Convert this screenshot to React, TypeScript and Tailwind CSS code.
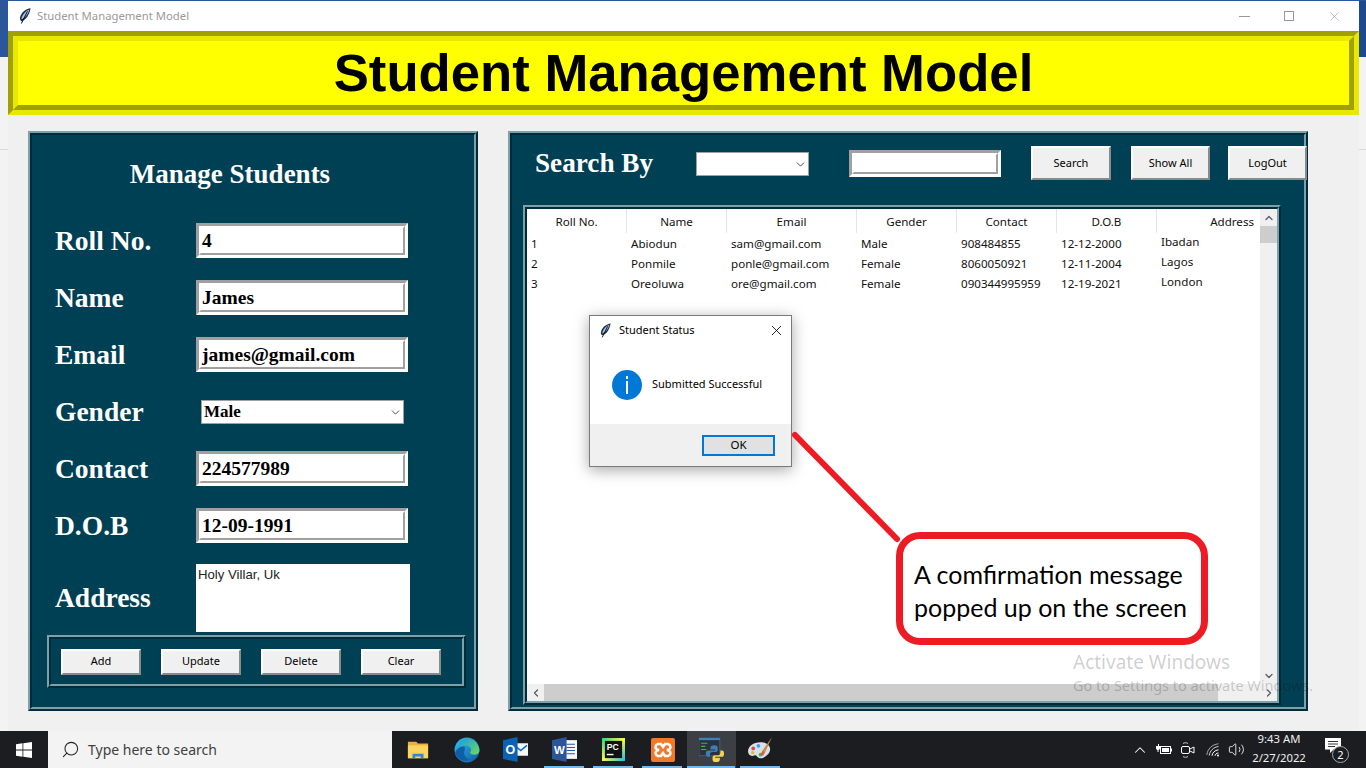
import React from 'react';
import { ChevronDown, ChevronLeft, ChevronRight, ChevronUp, Search, Volume2, X } from 'lucide-react';

const students = [
  { id: '1', name: 'Abiodun', email: 'sam@gmail.com', gender: 'Male', contact: '908484855', dob: '12-12-2000', address: 'Ibadan' },
  { id: '2', name: 'Ponmile', email: 'ponle@gmail.com', gender: 'Female', contact: '8060050921', dob: '12-11-2004', address: 'Lagos' },
  { id: '3', name: 'Oreoluwa', email: 'ore@gmail.com', gender: 'Female', contact: '090344995959', dob: '12-19-2021', address: 'London' },
];

const formFields = [
  { label: 'Roll No.', value: '4' },
  { label: 'Name', value: 'James' },
  { label: 'Email', value: 'james@gmail.com' },
];

const columns = 'grid grid-cols-[100px_100px_130px_100px_100px_100px_104px]';

function Feather({ className }: { className?: string }) {
  return (
    <svg viewBox="0 0 12 16" className={className}>
      <path d="M11.500 0.300C7 0.800 1.800 4.600 1 9.800C0.800 11.200 1.300 12.600 2.300 13.200C6.600 12.400 10.600 7 11.500 0.300Z" fill="#24303f" />
      <path d="M10.200 1.800C6.800 3 3 6.800 2.400 11.200C5.800 10.200 9.200 6.200 10.200 1.800Z" fill="#9cc4f4" />
      <path d="M8.400 3.400L2.400 15.500" stroke="#0b0f14" strokeWidth="1" fill="none" />
    </svg>
  );
}

function Ridge({ className, children }: { className?: string; children?: React.ReactNode }) {
  return (
    <div className={`shrink-0 border-2 border-t-[#7f9fa9] border-l-[#7f9fa9] border-r-[#002c3a] border-b-[#002c3a] ${className ?? ''}`}>
      <div className="w-full h-full border-2 border-t-[#002c3a] border-l-[#002c3a] border-r-[#7f9fa9] border-b-[#7f9fa9] bg-[#004054]">
        {children}
      </div>
    </div>
  );
}

function SunkenInput({ value, className }: { value?: string; className?: string }) {
  return (
    <div className={`shrink-0 border-[3px] border-t-[#a0a0a0] border-l-[#a0a0a0] border-r-white border-b-white bg-white ${className ?? ''}`}>
      <div className="w-full h-full border-2 border-t-white border-l-white border-r-[#a0a0a0] border-b-[#a0a0a0] flex items-center pl-px text-[19.500px] leading-none font-bold text-black font-['Liberation_Serif',serif]">
        {value}
      </div>
    </div>
  );
}

function TkButton({ label, className }: { label: string; className?: string }) {
  return (
    <button className={`shrink-0 flex items-center justify-center bg-[#f0f0f0] border-2 border-t-white border-l-white border-r-[#8a8a8a] border-b-[#8a8a8a] text-[11px] text-black ${className ?? ''}`}>
      {label}
    </button>
  );
}

function FormLabel({ children }: { children: React.ReactNode }) {
  return <span className="w-[141px] shrink-0 text-[27.500px] leading-none font-bold text-white font-['Liberation_Serif',serif]">{children}</span>;
}

function FolderIcon() {
  return (
    <svg viewBox="0 0 24 24" className="w-[22px] h-[22px]">
      <path d="M1 3h9l2 2h11v16H1z" fill="#e9b23c" />
      <rect x="1" y="7" width="22" height="14" fill="#fcd462" />
      <path d="M6 21v-5h12v5h-3v-2H9v2z" fill="#2d8ad6" />
    </svg>
  );
}

function EdgeIcon() {
  return (
    <svg viewBox="0 0 24 24" className="w-[26px] h-[26px]">
      <defs>
        <linearGradient id="edgeA" x1="0" y1="0" x2="1" y2="1">
          <stop offset="0" stopColor="#35c1f1" />
          <stop offset="1" stopColor="#0c59a4" />
        </linearGradient>
        <linearGradient id="edgeB" x1="0" y1="0" x2="1" y2="1">
          <stop offset="0" stopColor="#1b9de2" />
          <stop offset="1" stopColor="#6fdc5c" />
        </linearGradient>
      </defs>
      <circle cx="12" cy="12" r="11.500" fill="url(#edgeA)" />
      <path d="M5 6C8-1 22 0 23.500 12c.2 4-4 5-7 4-2-.6-2-2-1-3 1-2-1-5-4-5-3 0-5 1-6.500-2z" fill="url(#edgeB)" />
      <path d="M10 12c-2 4 1 8 5 9-5 3-12 0-14-6 1-4 5-7 9-6z" fill="#0f5fa8" />
    </svg>
  );
}

function OutlookIcon() {
  return (
    <svg viewBox="0 0 24 24" className="w-[25px] h-[25px]">
      <rect x="10" y="6" width="14" height="12" fill="#f4f8fc" />
      <path d="M11 8l6 5 6-5" fill="none" stroke="#0f6cbd" strokeWidth="1.500" />
      <path d="M0 3l14-3v24L0 21z" fill="#0a62b4" />
      <text x="7" y="16.500" textAnchor="middle" fontSize="12" fontWeight="700" fill="white" fontFamily="Liberation Sans, sans-serif">O</text>
    </svg>
  );
}

function WordIcon() {
  return (
    <svg viewBox="0 0 24 24" className="w-[25px] h-[25px]">
      <rect x="11" y="3" width="13" height="18" fill="#f4f6fa" />
      <path d="M14 7h8M14 10h8M14 13h8M14 16h8" stroke="#2b579a" strokeWidth="1" />
      <path d="M0 3l14-3v24L0 21z" fill="#2b579a" />
      <text x="7" y="16" textAnchor="middle" fontSize="11" fontWeight="700" fill="white" fontFamily="Liberation Sans, sans-serif">W</text>
    </svg>
  );
}

function PyCharmIcon() {
  return (
    <svg viewBox="0 0 24 24" className="w-[23px] h-[23px]">
      <defs>
        <linearGradient id="pcEdge" x1="0" y1="0" x2="1" y2="1">
          <stop offset="0" stopColor="#21d789" />
          <stop offset="0.500" stopColor="#fcf84a" />
          <stop offset="1" stopColor="#07c3f2" />
        </linearGradient>
      </defs>
      <rect width="24" height="24" fill="url(#pcEdge)" />
      <rect x="3" y="3" width="18" height="18" fill="#111" />
      <text x="5" y="13" fontSize="9" fontWeight="700" fill="white" fontFamily="Liberation Sans, sans-serif">PC</text>
      <rect x="5" y="16.500" width="7" height="1.500" fill="white" />
    </svg>
  );
}

function XamppIcon() {
  return (
    <svg viewBox="0 0 24 24" className="w-[24px] h-[24px]">
      <rect width="24" height="24" rx="2" fill="#f0792b" />
      <path d="M7 6h3l2 3 2-3h3a3 3 0 0 1 1 5.500l-2 .5 2 .5A3 3 0 0 1 17 18h-3l-2-3-2 3H7a3 3 0 0 1-1-5.500l2-.5-2-.5A3 3 0 0 1 7 6z" fill="none" stroke="white" strokeWidth="2.600" />
    </svg>
  );
}

function PythonIcon() {
  return (
    <svg viewBox="0 0 24 24" className="w-[25px] h-[25px]">
      <rect x="0" y="1" width="20" height="17" fill="#2c3239" stroke="#41648a" strokeWidth="0.800" />
      <rect x="0" y="1" width="20" height="2" fill="#3f82c4" />
      <path d="M2 6h6M2 9h4M2 12h5" stroke="#4caf50" strokeWidth="1" />
      <path d="M15 8c-3 0-4 1-4 2.500V12h4.500v1H9c-1.500 0-2.500 1-2.500 3s1 3 2.500 3h1.500v-2c0-1.500 1-2.500 2.500-2.500h3c1 0 2-1 2-2v-2C18 9 17 8 15 8z" fill="#3f7cb8" />
      <path d="M16 24c3 0 4-1 4-2.500V20h-4.500v-1H22c1.500 0 2-1 2-3s-.5-3-2-3h-1.500v2c0 1.500-1 2.500-2.500 2.500h-3c-1 0-2 1-2 2v2c0 1.500 1 2.500 3 2.500z" fill="#f7d44c" />
    </svg>
  );
}

function PaintIcon() {
  return (
    <svg viewBox="0 0 24 24" className="w-[25px] h-[25px]">
      <path d="M12 5C5 5 0 9 0 14c0 3 3 5 5 4 2-1 3-.5 4 1 1.500 2 5 2 8-.5 3-2 5-5 4-8.500C20 7 16 5 12 5z" fill="#d6e3ee" />
      <circle cx="5" cy="11" r="1.800" fill="#d94b4b" />
      <circle cx="10" cy="8.500" r="1.800" fill="#3f9fe0" />
      <circle cx="4.500" cy="15" r="1.600" fill="#f0b429" />
      <circle cx="12" cy="17" r="1.800" fill="#52b04f" />
      <path d="M23 0l-9 13 2.500 1.500z" fill="#c98a3c" />
      <path d="M14 13l2.500 1.500-2 3.500-2.500-1z" fill="#e05a3a" />
    </svg>
  );
}

function BatteryIcon() {
  return (
    <svg viewBox="0 0 16 12" className="w-4 h-3" fill="white">
      <path d="M2 0v2H0v2c0 1 .6 1.700 1.500 1.900V8h1V5.900C3.400 5.700 4 5 4 4V2H3V0z" />
      <rect x="4.500" y="2.500" width="10" height="7" fill="none" stroke="white" />
      <rect x="6" y="4" width="7" height="4" />
      <rect x="15" y="4.500" width="1" height="3" />
    </svg>
  );
}

function CameraIcon() {
  return (
    <svg viewBox="0 0 14 16" className="w-[14px] h-4" fill="none" stroke="white" strokeWidth="1">
      <rect x="0.500" y="4.500" width="8" height="7" rx="1.500" />
      <path d="M9 7l4-2v6l-4-2" />
      <path d="M2 1.500c1-1 4-1 5 0M2 14.500c1 1 4 1 5 0" stroke="#c8c8c8" />
    </svg>
  );
}

function WifiIcon() {
  return (
    <svg viewBox="0 0 14 14" className="w-[14px] h-[14px]" fill="none" stroke="white" strokeWidth="1">
      <path d="M0.800 12C1.500 6 6 1.500 12.500 0.800" strokeOpacity="0.6" />
      <path d="M3.200 12.500C3.800 8 7.500 4 12.500 3.500" strokeOpacity="0.8" />
      <path d="M6 12.800C6.300 10 8.500 7.200 12.500 6.800" />
      <path d="M9 12.800C9.200 11.500 10.500 10 12.500 10" />
      <circle cx="12" cy="12.500" r="1" fill="white" stroke="none" />
    </svg>
  );
}

function NotificationIcon() {
  return (
    <div className="relative w-[20px] h-[20px]">
      <svg viewBox="0 0 16 16" className="w-[16px] h-[16px]">
        <path d="M0 0h16v11.500H8.500L5 15v-3.500H0z" fill="white" />
        <path d="M3 3.500h10M3 6h10M3 8.500h7" stroke="#1b1d21" strokeWidth="0.900" />
      </svg>
      <span className="absolute left-[7px] top-[8px] w-[17px] h-[17px] rounded-full bg-[#1b1d21] border border-[#a8a8a8] flex items-center justify-center text-[11px] leading-none text-white">2</span>
    </div>
  );
}

const taskApps = [
  { key: 'folder', icon: <FolderIcon />, underline: '' },
  { key: 'edge', icon: <EdgeIcon />, underline: '' },
  { key: 'outlook', icon: <OutlookIcon />, underline: '' },
  { key: 'word', icon: <WordIcon />, underline: 'left-[4px] right-[5px]' },
  { key: 'pycharm', icon: <PyCharmIcon />, underline: 'left-[4px] right-[5px]' },
  { key: 'xampp', icon: <XamppIcon />, underline: 'left-[4px] right-[5px]' },
  { key: 'python', icon: <PythonIcon />, underline: 'left-0 right-[1px]', active: true },
  { key: 'paint', icon: <PaintIcon />, underline: 'left-[4px] right-[5px]' },
];

function Taskbar() {
  return (
    <div className="h-[37px] shrink-0 flex items-stretch bg-[#1b1d21] text-white">
      <div className="w-12 flex items-center justify-center">
        <svg viewBox="0 0 16 16" className="w-4 h-4" fill="white">
          <path d="M0 2.200L6.500 1.300V7.600H0zM7.300 1.200L16 0V7.600H7.300zM0 8.400H6.500V14.700L0 13.800zM7.300 8.400H16V16L7.300 14.800z" />
        </svg>
      </div>
      <div className="w-[344px] flex items-center bg-[#f3f3f3] text-[#3f3f3f] text-[14px]">
        <Search size={19} strokeWidth={1.3} className="ml-[13px] mr-[8px] -scale-x-100 text-[#222]" />
        <span>Type here to search</span>
      </div>
      <div className="w-px" />
      {taskApps.map((app) => (
        <div key={app.key} className={`relative w-[49px] flex items-center justify-center ${app.active ? 'bg-[#3c3f43]' : ''}`}>
          {app.icon}
          {app.underline && <span className={`absolute bottom-0 h-0.5 bg-[#76b9ed] ${app.underline}`} />}
        </div>
      ))}
      <div className="ml-auto flex items-center">
        <ChevronUp size={18} strokeWidth={1.4} className="mr-[7px]" />
        <div className="mr-[9px]"><BatteryIcon /></div>
        <div className="mr-[11px]"><CameraIcon /></div>
        <div className="mr-[8px]"><WifiIcon /></div>
        <Volume2 size={17} strokeWidth={1.2} className="mr-[2px]" />
        <div className="w-[64px] flex flex-col items-center text-[11.300px] leading-[19px] text-[#f0f0f0] pb-[3px]">
          <span>9:43 AM</span>
          <span>2/27/2022</span>
        </div>
        <div className="ml-[14px] mr-[21px] mb-1"><NotificationIcon /></div>
      </div>
    </div>
  );
}

function TitleBar() {
  return (
    <div className="h-[30px] shrink-0 flex items-center bg-white">
      <Feather className="ml-[11px] w-3 h-4" />
      <span className="ml-[6px] text-[11.300px] text-[#9a9a9a]">Student Management Model</span>
      <div className="ml-auto flex items-center text-[#999] pr-[17px]">
        <span className="w-[11px] h-px bg-[#999] mr-[34px]" />
        <span className="w-[10px] h-[10px] border border-[#999] mr-[33px]" />
        <X size={15} strokeWidth={1} />
      </div>
    </div>
  );
}

function Banner() {
  return (
    <div className="h-[84px] shrink-0 border-[5px] border-t-[#a0a000] border-l-[#a0a000] border-r-[#e8e800] border-b-[#e8e800]">
      <div className="w-full h-full border-[5px] border-t-[#e8e800] border-l-[#e8e800] border-r-[#a0a000] border-b-[#a0a000] bg-[#ffff00] flex items-center justify-center">
        <h1 className="text-[52.700px] leading-none font-bold text-black font-['Liberation_Sans',sans-serif]">Student Management Model</h1>
      </div>
    </div>
  );
}

function ManagePanel() {
  return (
    <Ridge className="w-[450px] h-[580px]">
      <div className="pl-[23px]">
        <h2 className="w-[350px] h-[78px] mb-[10px] flex items-center justify-center text-[27px] font-bold text-white font-['Liberation_Serif',serif]">Manage Students</h2>
        <div className="flex flex-col gap-[22px]">
          {formFields.map((field) => (
            <div key={field.label} className="flex items-center h-[35px]">
              <FormLabel>{field.label}</FormLabel>
              <SunkenInput value={field.value} className="w-[212px] h-[35px]" />
            </div>
          ))}
          <div className="flex items-center h-[35px]">
            <FormLabel>Gender</FormLabel>
            <div className="ml-[5px] w-[203px] h-6 mt-px flex items-center justify-between pl-0.5 pr-px bg-white border border-[#a0a0a0] text-[17px] font-bold text-black font-['Liberation_Serif',serif]">
              <span>Male</span>
              <ChevronDown size={13} strokeWidth={1.6} className="text-[#333]" />
            </div>
          </div>
          <div className="flex items-center h-[35px]">
            <FormLabel>Contact</FormLabel>
            <SunkenInput value="224577989" className="w-[212px] h-[35px]" />
          </div>
          <div className="flex items-center h-[35px]">
            <FormLabel>D.O.B</FormLabel>
            <SunkenInput value="12-09-1991" className="w-[212px] h-[35px]" />
          </div>
        </div>
        <div className="flex items-center mt-[21px]">
          <FormLabel>Address</FormLabel>
          <div className="w-[214px] h-[68px] bg-white pl-0.5 pt-px text-[13.200px] text-[#222] font-['Liberation_Sans',sans-serif]">Holy Villar, Uk</div>
        </div>
      </div>
      <Ridge className="ml-[15px] mt-[3px] w-[419px] h-[53px]">
        <div className="h-full flex items-center pl-[10px] gap-5">
          {['Add', 'Update', 'Delete', 'Clear'].map((label) => (
            <TkButton key={label} label={label} className="w-20 h-[26px]" />
          ))}
        </div>
      </Ridge>
    </Ridge>
  );
}

function ScrollBars() {
  return (
    <>
      <div className="absolute right-0 top-0 bottom-[17px] w-[17px] flex flex-col items-center bg-[#f0f0f0]">
        <div className="h-[17px] w-full flex items-center justify-center">
          <ChevronUp size={12} strokeWidth={2.4} className="text-[#555]" />
        </div>
        <div className="h-[17px] w-full bg-[#cdcdcd]" />
        <div className="mt-auto h-[17px] w-full flex items-center justify-center">
          <ChevronDown size={12} strokeWidth={2.4} className="text-[#555]" />
        </div>
      </div>
      <div className="absolute left-0 right-0 bottom-0 h-[17px] flex items-center bg-[#f0f0f0]">
        <div className="w-[17px] flex justify-center">
          <ChevronLeft size={12} strokeWidth={2.4} className="text-[#555]" />
        </div>
        <div className="h-full w-[674px] bg-[#cdcdcd]" />
        <div className="ml-auto w-[17px] flex justify-center">
          <ChevronRight size={12} strokeWidth={2.4} className="text-[#555]" />
        </div>
      </div>
    </>
  );
}

function StudentTable() {
  return (
    <Ridge className="ml-[11px] mt-[25px] w-[758px] h-[500px]">
      <div className="relative w-full h-full bg-white text-[11.600px] text-[#111] overflow-hidden">
        <div className={`${columns} h-[24px] items-center`}>
          {['Roll No.', 'Name', 'Email', 'Gender', 'Contact', 'D.O.B'].map((title) => (
            <span key={title} className="h-full flex items-center justify-center pt-0.5 border-r border-[#e5e5e5]">{title}</span>
          ))}
          <span className="text-right pr-[7px] pt-0.5">Address</span>
        </div>
        {students.map((s) => (
          <div key={s.id} className={`${columns} h-5 items-center [&>span]:pl-1`}>
            <span>{s.id}</span>
            <span>{s.name}</span>
            <span>{s.email}</span>
            <span>{s.gender}</span>
            <span>{s.contact}</span>
            <span>{s.dob}</span>
            <span className="mb-1">{s.address}</span>
          </div>
        ))}
        <div className="absolute left-0 right-4 bottom-4 top-[84px] border-r border-b border-[#8a8a8a]" />
        <ScrollBars />
      </div>
    </Ridge>
  );
}

function SearchPanel() {
  return (
    <Ridge className="w-[800px] h-[580px]">
      <div className="mt-[11px] h-[34px] flex items-center pl-[23px]">
        <span className="w-[161px] shrink-0 pt-0.5 text-[27.200px] leading-none font-bold text-white font-['Liberation_Serif',serif]">Search By</span>
        <div className="w-[113px] h-6 mt-0.5 shrink-0 flex items-center justify-end pr-px bg-white border border-[#a0a0a0]">
          <ChevronDown size={13} strokeWidth={1.6} className="text-[#333]" />
        </div>
        <SunkenInput className="ml-10 w-[152px] h-[27px]" />
        <TkButton label="Search" className="ml-[30px] w-20 h-[34px]" />
        <TkButton label="Show All" className="ml-5 w-[79px] h-[34px]" />
        <TkButton label="LogOut" className="ml-[18px] w-[79px] h-[34px]" />
      </div>
      <StudentTable />
    </Ridge>
  );
}

function StatusDialog() {
  return (
    <div className="absolute left-[589px] top-[315px] w-[203px] h-[152px] flex flex-col bg-white border border-[#7a7a7a] shadow-[0_3px_14px_rgba(0,0,0,0.35)] text-[11px] text-black">
      <div className="h-[29px] flex items-center pl-[10px]">
        <Feather className="w-[11px] h-[15px]" />
        <span className="ml-[8px]">Student Status</span>
        <X size={17} strokeWidth={1.2} className="ml-auto mr-[6px]" />
      </div>
      <div className="flex-1 flex items-center pl-[22px]">
        <svg viewBox="0 0 30 30" className="w-[30px] h-[30px]">
          <circle cx="15" cy="15" r="15" fill="#0078d7" />
          <rect x="14" y="6" width="2" height="3" fill="white" />
          <rect x="14" y="11" width="2" height="13" fill="white" />
        </svg>
        <span className="ml-[10px]">Submitted Successful</span>
      </div>
      <div className="h-[42px] flex items-center justify-end pr-4 bg-[#f0f0f0]">
        <div className="w-[73px] h-[21px] flex items-center justify-center bg-[#e1e1e1] border-2 border-[#0078d7] text-[11.500px]">OK</div>
      </div>
    </div>
  );
}

function Callout() {
  return (
    <>
      <svg className="absolute left-[790px] top-[430px] w-[112px] h-[114px] pointer-events-none" viewBox="0 0 112 114">
        <line x1="5" y1="5" x2="107" y2="109" stroke="#ed1c24" strokeWidth="6" strokeLinecap="round" />
      </svg>
      <div className="absolute left-[896px] top-[532px] w-[312px] h-[113px] flex flex-col justify-center pl-[11px] pt-1 bg-white border-[7px] border-[#ed1c24] rounded-[24px] text-[25px] leading-[33px] text-black font-['Lato',sans-serif]">
        <span>A comfirmation message</span>
        <span>popped up on the screen</span>
      </div>
    </>
  );
}

function ActivateWatermark() {
  return (
    <div className="absolute left-[1073px] top-[649px] pointer-events-none text-black/20 whitespace-nowrap">
      <div className="text-[19px] leading-[26px]">Activate Windows</div>
      <div className="text-[14.500px] leading-[20px]">Go to Settings to activate Windows.</div>
    </div>
  );
}

export default function App() {
  return (
    <div className="relative w-[1366px] h-[768px] overflow-hidden flex flex-col bg-[#f3f3f3] font-['Noto_Sans',sans-serif]">
      <div className="h-px shrink-0 bg-[#2b579a]" />
      <div className="h-[730px] shrink-0 flex">
        <div className="w-2 shrink-0 flex flex-col">
          <div className="h-[56px] bg-[#2b579a]" />
          <div className="h-[93px] border-b border-[#d9d9d9]" />
        </div>
        <div className="w-[1351px] shrink-0 flex flex-col bg-[#f0f0f0]">
          <TitleBar />
          <Banner />
          <div className="flex gap-[30px] pl-5 pt-4">
            <ManagePanel />
            <SearchPanel />
          </div>
        </div>
        <div className="flex-1 flex flex-col">
          <div className="h-[56px] bg-[#1d4a8f]" />
          <div className="h-[93px] border-b border-[#d9d9d9]" />
        </div>
      </div>
      <Taskbar />
      <StatusDialog />
      <Callout />
      <ActivateWatermark />
    </div>
  );
}
